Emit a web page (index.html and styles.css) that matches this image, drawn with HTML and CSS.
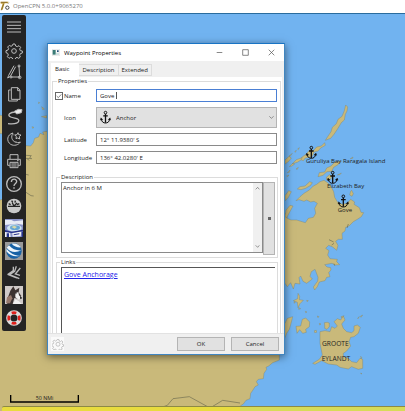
FILE: index.html
```html
<!DOCTYPE html>
<html lang="en">
<head>
<meta charset="utf-8">
<title>OpenCPN 5.0.0+9065270</title>
<link rel="stylesheet" href="styles.css">
</head>
<body>
<header class="app-title">
  <svg class="app-logo" viewBox="0 0 30 30" aria-hidden="true">
    <path d="M2 2h24l-2 5H14L8 26H2L8 8H2z" fill="#c9a545"/>
    <path d="M4 28 11 8M2 4h20" stroke="#6b5420" stroke-width="2" fill="none"/>
    <circle cx="22" cy="20" r="5" fill="none" stroke="#444" stroke-width="3"/>
    <path d="M23 9l4-4" stroke="#888" stroke-width="2"/>
  </svg>
  <span>OpenCPN 5.0.0+9065270</span>
</header>

<main class="chart">
  <svg class="map" viewBox="0 39 1215 1194" preserveAspectRatio="xMinYMin slice" role="img" aria-label="Nautical chart">
    <defs>
      <g id="anchor" fill="none" stroke="#111">
        <circle cx="0" cy="-15" r="4" stroke-width="3"/>
        <path d="M0-11V16M-7-5H7" stroke-width="4"/>
        <path d="M-13 4C-12 14-6 17 0 17S12 14 13 4" stroke-width="3"/>
        <path d="M-16 8l2-7 6 6zM16 8l-2-7-6 6z" fill="#111" stroke-width="1"/>
      </g>
    </defs>
    <g class="land">
      <path d="M-5 602 30 590 50 500 78 437 92 438 100 428 104 415 116 411 120 400 132 404 128 396 140 394 145 400 300 420 600 400 840 650 858 640 862 655 873 660 890 660 916 668 925 655 940 652 947 640 944 625 952 610 942 604 932 606 920 600 912 604 897 599 888 602 900 590 912 580 928 570 940 558 950 553 960 545 972 541 983 548 992 557 1001 575 1004 592 1013 607 1027 613 1042 610 1052 598 1064 606 1062 613 1078 623 1083 637 1091 638 1084 650 1072 658 1060 665 1047 678 1037 682 1035 693 1026 700 1027 718 1015 718 1007 724 1014 736 1010 751 998 741 986 736 977 745 987 752 983 765 990 776 1012 778 1010 785 1019 794 1005 795 996 790 974 794 981 801 992 803 993 810 986 818 990 830 980 832 975 842 958 846 952 860 944 870 940 861 953 843 954 832 945 808 934 815 930 829 937 837 920 850 909 844 902 828 897 833 900 852 885 850 880 867 872 848 862 860 855 850 830 870 820 990 855 970 862 955 878 950 873 970 868 988 860 1000 852 1020 838 1040 838 1080 818 1088 806 1098 798 1102 800 1108 792 1120 790 1136 775 1138 769 1145 775 1155 765 1160 757 1173 752 1180 750 1196 738 1201 730 1212 722 1217 720 1240-5 1240z"/>
      <path d="M-5 345 8 347 20 380 12 402-5 400zM124 350l16-3v7zM125 320l8 7-5 2zM116 306l3 2-3 3zM96 380l6 2-4 3z"/>
      <path d="M1037 315l6 6-2 12-5 10-3 17-9 8-12 20-10 15-10 12-16 6 9-14 8-12 4-13 12-11 5-13 12-9 7-17z"/>
      <path d="M974 428l2 8-14 8-8 9-12 3-5 13-13 4-8 1-6 8-8-3 3-7 13-9 10-12 12 1 10-11 14-3z"/>
      <path d="M903 480l4-7-18 6-12 12 15-4zM884 492l-7-1-9 9 8-2zM855 480l12-11 7 5-8 10-12 9zM862 518l8-8-2 7zM867 468l10-8-7 9zM884 455l5-4-3 6zM893 447l5-4-3 6zM888 507l7-5-3 6zM860 528l7-3-4 5zM1051 476l8-5-1 4z"/>
      <path d="M1005 486l-12 12-13 6-6 12-16 2-4 12 15-4 12-11 14-1 6-12 13-8 10-10zM1012 525l12-6-4 5zM979 532l9-8 8 5-5 10-11 1z"/>
      <path d="M892 567l8-7 15-2 14-13 8 3-5 8-15 9-14 4zM855 587l11-15 8 3-9 17-9 10zM858 630l12-14 9 2-11 20-8 15-5-3zM1052 574l3-3 5 10-4 8-7-4z"/>
      <path d="M894 880l5 9-1 10 12 2-10 10-6 12-2-16-12-5 13-6zM920 901l5 1-4 3zM882 905l4 1-3 4zM896 923l6 3-6 2zM916 934l5 2-4 2z"/>
      <path d="M907 958l10-4 12 12-1 14-11 8 2 9-11 3-9-11-8 11-3-21 14-1zM943 992l6-1 1 6-6 1zM952 948l5 2-3 3zM958 970l5 2-4 3z"/>
      <path d="M960 995 975 992 990 995 995 980 1005 985 1012 978 1002 965 1012 956 1022 960 1030 948 1035 960 1025 972 1030 985 1040 995 1055 998 1062 992 1062 978 1072 975 1081 982 1075 1000 1062 1010 1052 1012 1047 1025 1052 1038 1040 1053 1030 1060 1030 1070 1045 1075 1055 1085 1070 1088 1080 1075 1088 1078 1088 1105 1075 1108 1055 1100 1045 1107 1020 1102 1010 1095 985 1092 965 1082 945 1093 938 1090 958 1078 967 1065 960 1030z"/>
      <path d="M974 975l-1-7 9-1 6 2v11l-7 8-7-3zM1073 954l5-4-4 6zM1081 949l7-4-5 7zM1023 950l9-3-7 7zM1082 1069l3 3-1 4zM1082 1119l4 2-3 1z"/>
    </g>
    <path class="coast" d="M78 466l16 1-5 5 6 4-16-1 9 6M78 523l8 2M78 577l15 10 8 1M457 1232l45-16 17-20 49-6 62 34 38-23 52 8M1004 797l-2-6M987 719l14 7M1045 672l-4 12M1002 730l-7 5"/>
    <use href="#anchor" x="934" y="458"/>
    <use href="#anchor" x="998" y="533"/>
    <use href="#anchor" x="1030" y="604"/>
    <g class="place">
      <text x="918" y="490">Guruliya Bay Raragala Island</text>
      <text x="981" y="564">Elizabeth Bay</text>
      <text x="1013" y="635">Gove</text>
    </g>
    <g class="region">
      <text x="966" y="1039">GROOTE</text>
      <text x="965" y="1083">EYLANDT</text>
    </g>
    <path d="M32 1185v21h203v-21" fill="none" stroke="#000" stroke-width="4"/>
    <text class="scale" x="107" y="1199">50 NMi</text>
  </svg>
  <div class="status-band"></div>

  <nav class="toolbar" aria-label="Chart tools">
    <button aria-label="Menu"><svg viewBox="0 0 54 54"><path d="M6 12h42M6 22h42M6 32h42M6 42h42" stroke-width="3"/></svg></button>
    <button aria-label="Options"><svg viewBox="0 0 54 54"><path d="M24 9h6l2 6 5 2 5-3 5 5-3 5 2 5 6 1v6l-6 2-2 5 2 5-5 4-5-3-4 2-2 5h-6l-2-5-5-2-5 3-5-5 3-5-2-5-5-2v-6l6-2 2-4-3-5 5-5 5 3 4-2z"/><circle cx="27" cy="30" r="7"/></svg></button>
    <button aria-label="Route"><svg viewBox="0 0 54 54"><path d="M27 8 11 37l-3 8 8-5L32 11M42 9l2 36M19 42h24"/><circle cx="42" cy="9" r="3"/><circle cx="44" cy="43" r="4"/><circle cx="18" cy="42" r="3"/></svg></button>
    <button aria-label="Route manager"><svg viewBox="0 0 54 54"><path d="M19 8h20l6 8v27H19zM38 9v8h7M17 15h-6v33h26v-4"/></svg></button>
    <button aria-label="Track"><svg viewBox="0 0 54 54"><path d="M34 12c-20-1-29 10-17 15s28 4 24 13c-3 9-21 8-32 7" stroke-width="4"/><path d="M28 10 40 4l11 1-2 9-14 4z" fill="#eee"/></svg></button>
    <button aria-label="Colour scheme"><svg viewBox="0 0 54 54"><path d="M24 9C6 13 3 34 17 43c10 6 24 2 29-7-11 5-22-1-25-10-2-6 0-12 3-17z"/><path d="M39 8l2 6 7 1-5 5 1 7-6-3-5 2 1-6-4-5 6-1z"/><path d="M27 13v3M33 33v2" /></svg></button>
    <button aria-label="Print"><svg viewBox="0 0 54 54"><path d="M15 21V8h24v13M14 40H8V22h38v18h-6M15 31h24v16H15zM19 36h16M19 42h16M36 26h5"/></svg></button>
    <button aria-label="Help"><svg viewBox="0 0 54 54"><circle cx="27" cy="27" r="22" stroke-width="4"/><path d="M19 21c1-12 17-10 16-1-1 7-8 6-8 13M27 37v4" stroke-width="4"/></svg></button>
    <button aria-label="Dashboard"><svg viewBox="0 0 54 54"><circle cx="27" cy="27" r="22" fill="#c9c9c9" stroke="none"/><path d="M9 28h36M27 28 22 17M11 20l6 3M20 11l3 5M31 11l-1 6M43 20l-7 3M27 27l9-9" stroke="#222" stroke-width="4"/></svg></button>
    <button aria-label="Weather"><svg viewBox="0 0 54 54"><g stroke="none"><path fill="#8b94c8" d="M0 0h54v54H0z"/><path fill="#e8ebf5" d="M0 3h19l8 4L54 4v13L36 14 0 18z"/><ellipse cx="28" cy="27" rx="22" ry="11" fill="#d0e6f0"/><ellipse cx="30" cy="26" rx="15" ry="7" fill="#65a6d5"/><path fill="#d9d8a6" d="M19 24l9-4 8 4-7 5z"/><path fill="#f1f1f4" d="M0 38l15 2 2 14H0zM22 42l27-5-2 14-24 2z"/><path fill="#25318a" d="M5 43h7v11H5zM0 33l20 5 34-6v5l-34 5-20-3zM26 46l17-3v3l-17 3zM50 38h4v16h-4z"/></g></svg></button>
    <button aria-label="Globe view"><svg viewBox="0 0 54 54"><g stroke="none"><path fill="#999" d="M0 0h54v54H0z"/><circle cx="27" cy="27" r="23" fill="#1762a6"/><path fill="#eef6fc" d="M5 17C17 32 32 33 49 25c-14 1-28-3-37-15zM4 28c11 13 26 18 41 13-16 0-29-7-40-21zM20 5c8 9 18 12 28 11C41 7 31 2 20 5z"/></g></svg></button>
    <button aria-label="Tides"><svg viewBox="0 0 54 54"><path d="M25 8v12L10 30l33 14M46 12 31 30l14 4M34 7 29 22 15 31M8 31l27 11" stroke="#bbb" stroke-width="4"/></svg></button>
    <button aria-label="Logbook"><svg viewBox="0 0 54 54"><g stroke="none"><path fill="#cfcac8" d="M0 0h54v54H0z"/><path fill="#3c3230" d="M16 14 25 1l6 12 12-8-2 14 8 11-9 8-12-2-5 18H6l6-15-6 3z"/><path fill="#f1efee" d="M31 22l9-4 2 10 7 8-8 5-10-7zM31 40l10 5 10 9H24z"/><path fill="#97796c" d="M6 34l12-7 4 10-7 15H3z"/><path fill="#111" d="M45 31l7 5-6 4zM31 21l5 2-4 2z"/></g></svg></button>
    <button aria-label="Man overboard"><svg viewBox="0 0 54 54"><circle cx="27" cy="27" r="17" stroke="#ddd" stroke-width="13"/><path d="M20 12q7-2 14 0M20 42q7 2 14 0M12 20q-2 7 0 14M42 20q2 7 0 14" stroke="#e0201c" stroke-width="8"/></svg></button>
  </nav>

  <section class="dialog" role="dialog" aria-labelledby="dlg-title">
    <div class="dialog-title">
      <svg class="dialog-logo" viewBox="0 0 24 21" aria-hidden="true"><path fill="#fff" stroke="#b5b5b5" d="M1 1h22v19H1z"/><path fill="#397b76" d="M2 3h9v14H2z"/><path fill="#234d7a" d="M15 4h5v5h-5z"/><path fill="#cde0e0" d="M12 11h9v7h-9z"/></svg>
      <h1 id="dlg-title">Waypoint Properties</h1>
      <div class="window-buttons">
        <button aria-label="Minimize"><svg viewBox="0 0 20 20"><path d="M2 10h16"/></svg></button>
        <button aria-label="Maximize"><svg viewBox="0 0 20 20"><path d="M2 2h16v16H2z"/></svg></button>
        <button aria-label="Close"><svg viewBox="0 0 20 20"><path d="M2 2l16 16M18 2 2 18"/></svg></button>
      </div>
    </div>

    <div class="tabs" role="tablist">
      <button class="tab active" role="tab" aria-selected="true">Basic</button>
      <button class="tab" role="tab" aria-selected="false">Description</button>
      <button class="tab" role="tab" aria-selected="false">Extended</button>
    </div>

    <div class="panel">
      <fieldset class="properties">
        <legend>Properties</legend>
        <div class="form">
          <div class="check">
            <span class="box">
              <input id="show-name" type="checkbox" checked>
              <svg viewBox="0 0 24 24" aria-hidden="true"><path d="M5 12l5 5 9-10"/></svg>
            </span>
            <label for="show-name">Name</label>
          </div>
          <div class="field">
            <input class="text focused" type="text" value="Gove" aria-label="Name">
            <span class="caret"></span>
          </div>
          <label for="icon">Icon</label>
          <div class="field">
            <select id="icon"><option>Anchor</option></select>
            <svg class="select-icon" viewBox="-20 -22 40 44" aria-hidden="true"><use href="#anchor"/></svg>
            <svg class="select-arrow" viewBox="0 0 15 15" aria-hidden="true"><path d="M1 4l6 6 7-6"/></svg>
          </div>
          <label for="lat">Latitude</label>
          <input class="text" id="lat" type="text" value="12° 11.9380' S">
          <label for="lon">Longitude</label>
          <input class="text" id="lon" type="text" value="136° 42.0280' E">
        </div>

        <fieldset class="group description">
          <legend>Description</legend>
          <div class="description-row">
            <div class="memo">
              <textarea aria-label="Description">Anchor in 6 M</textarea>
              <div class="scrollbar" aria-hidden="true">
                <svg viewBox="0 0 15 15"><path d="M2 10l6-6 5 6"/></svg>
                <svg viewBox="0 0 15 15"><path d="M2 4l6 6 5-6"/></svg>
              </div>
            </div>
            <button class="more" aria-label="Edit description"><i></i></button>
          </div>
        </fieldset>

        <fieldset class="group links">
          <legend>Links</legend>
          <div class="link-list"><a href="#gove">Gove Anchorage</a></div>
        </fieldset>
      </fieldset>
    </div>

    <div class="footer">
      <button class="gear" aria-label="Settings"><svg viewBox="0 0 54 54"><path d="M23 7h8l2 7 5 2 6-4 5 6-4 6 2 5 5 1v7l-7 2-2 5 3 6-6 4-6-3-4 2-2 5h-7l-2-6-5-2-6 3-5-5 4-6-2-5-6-2v-7l7-2 2-5-4-6 6-5 6 4 4-2z"/><circle cx="27" cy="28" r="9"/></svg></button>
      <button class="action">OK</button>
      <button class="action">Cancel</button>
    </div>
  </section>
</main>
</body>
</html>
```
FILE: styles.css
```css
* {
  box-sizing: border-box;
}

body {
  margin: 0;
  height: 100vh;
  display: flex;
  flex-direction: column;
  overflow: hidden;
  font: 6px/8px "Open Sans", "Noto Sans", sans-serif;
  color: #222;
}

button,
input,
select,
textarea {
  font: inherit;
  color: inherit;
  margin: 0;
  padding: 0;
  border: 0;
  border-radius: 0;
  outline: 0;
}

.app-title {
  flex: none;
  height: 14px;
  display: flex;
  align-items: center;
  gap: 3px;
  padding-bottom: 1px;
  background: #fff;
  border-bottom: 1px solid #2a6c9e;
  color: #777;
}

.app-logo {
  width: 10px;
  height: 10px;
}

.chart {
  position: relative;
  flex: 1;
  overflow: hidden;
  background: #71b3f0;
}

.map {
  position: absolute;
  top: -1px;
  left: 0;
  width: 100%;
  height: calc(100% + 1px);
}

.land {
  fill: #c9b97a;
  stroke: #7d7a58;
  stroke-width: 1;
}

.coast {
  fill: none;
  stroke: #6e6c50;
  stroke-width: 2;
}

.place,
.region,
.scale {
  font-size: 18px;
  fill: #1d1d1d;
}

.region {
  font-size: 20px;
}

.scale {
  font-size: 16px;
}

.status-band {
  position: absolute;
  left: 2px;
  right: 0;
  bottom: 0;
  height: 5px;
  border-top: 1px solid #8d8a45;
  border-radius: 2px 0 0 0;
  background: linear-gradient(90deg, #e8dc3e 59%, #d7db58 59%);
}

.toolbar {
  position: absolute;
  top: 1px;
  bottom: 80px;
  left: 2px;
  width: 24px;
  padding: 1px 0 2px;
  display: grid;
  grid-auto-rows: 1fr;
  border-radius: 2px;
  background: #242424;
}

.toolbar button {
  display: grid;
  place-items: center;
  background: none;
}

.toolbar svg {
  width: 18px;
  height: 18px;
  fill: none;
  stroke: #bcbcbc;
  stroke-width: 3;
}

.dialog {
  position: absolute;
  top: 29px;
  right: 120px;
  bottom: 56px;
  left: 47px;
  display: flex;
  flex-direction: column;
  border: 1px solid #4186c0;
  border-top-color: #1874c4;
  background: #f0f0f0;
  box-shadow: 0 2px 8px rgba(0, 0, 0, 0.5);
}

.dialog-title {
  flex: none;
  height: 17px;
  padding: 0 9px 0 4px;
  display: flex;
  align-items: center;
  gap: 4px;
  background: #fff;
}

.dialog-logo {
  width: 8px;
  height: 7px;
}

h1 {
  flex: 1;
  margin: 0;
  font-size: 6px;
  font-weight: 400;
  color: #000;
}

.window-buttons {
  display: flex;
  gap: 19px;
}

.window-buttons button {
  display: grid;
  background: none;
}

.window-buttons svg {
  width: 7px;
  height: 7px;
  fill: none;
  stroke: #555;
  stroke-width: 2;
}

.tabs {
  flex: none;
  height: 16px;
  padding-left: 3px;
  display: flex;
  align-items: flex-end;
}

.tab {
  height: 12px;
  margin-bottom: 1px;
  padding: 0 3px;
  border: 1px solid #dcdcdc;
  border-left: 0;
  background: #f0f0f0;
}

.tab.active {
  height: 14px;
  margin: 0;
  padding: 0 10px 3px 4px;
  border: 0;
  background: #fff;
}

.panel {
  flex: 1;
  min-height: 0;
  margin: 0 2px 0 3px;
  padding: 0 1px;
  display: flex;
  background: #fff;
}

fieldset {
  min-width: 0;
  margin: 0;
  border: 1px solid #dcdcdc;
}

legend {
  height: 8px;
  padding: 0 1px;
}

.properties {
  flex: 1;
  display: flex;
  flex-direction: column;
  padding: 4px 2px 0;
  border-bottom: 0;
}

.properties > legend {
  margin-left: 2px;
}

.form {
  display: grid;
  grid-template-columns: 41px 1fr;
  row-gap: 5px;
  align-items: center;
  padding-right: 1px;
}

.form > label {
  padding-left: 9px;
}

.check {
  display: flex;
  align-items: center;
  gap: 1px;
}

.box {
  position: relative;
  display: grid;
}

.box input {
  appearance: none;
  width: 8px;
  height: 8px;
  border: 1px solid #666;
  background: #fff;
}

.box svg {
  position: absolute;
  inset: 0;
  fill: none;
  stroke: #444;
  stroke-width: 2;
  pointer-events: none;
}

.box input:not(:checked) + svg {
  display: none;
}

.field {
  position: relative;
  display: flex;
}

.text {
  width: 100%;
  height: 13px;
  padding: 0 3px;
  border: 1px solid #8a8a8a;
  background: #fff;
}

.text.focused {
  border-color: #4a7fd4;
}

.caret {
  position: absolute;
  left: 20px;
  top: 3px;
  width: 1px;
  height: 7px;
  background: #555;
}

select {
  appearance: none;
  width: 100%;
  height: 21px;
  padding-left: 19px;
  border: 1px solid #b4b4b4;
  background: #e1e1e1;
}

.select-icon {
  position: absolute;
  left: 3px;
  top: 3px;
  width: 13px;
  height: 15px;
}

.select-arrow {
  position: absolute;
  right: 3px;
  top: 8px;
  width: 5px;
  height: 5px;
}

.select-arrow path,
.scrollbar path {
  fill: none;
  stroke: #666;
  stroke-width: 2;
}

.group {
  margin: 0 0 0 1px;
  padding: 1px 2px 2px 4px;
}

.group legend {
  margin-left: -1px;
}

.description {
  margin-top: 9px;
}

.description-row {
  display: flex;
}

.memo {
  flex: 1;
  height: 71px;
  display: flex;
  border: 1px solid #8a8a8a;
}

textarea {
  flex: 1;
  min-width: 0;
  padding: 1px;
  resize: none;
  overflow: hidden;
  background: #fff;
}

.scrollbar {
  width: 9px;
  padding: 3px 0;
  display: flex;
  flex-direction: column;
  justify-content: space-between;
  align-items: center;
  background: #f0f0f0;
}

.scrollbar svg {
  width: 5px;
  height: 5px;
}

.more {
  width: 12px;
  height: 73px;
  display: grid;
  place-items: center;
  border: 1px solid #b4b4b4;
  background: #e1e1e1;
}

.more i {
  width: 3px;
  height: 3px;
  background: #666;
}

.links {
  flex: 1;
  display: flex;
  flex-direction: column;
  padding-bottom: 0;
  border-bottom: 0;
}

.link-list {
  flex: 1;
  padding: 3px 2px;
  border-top: 1px solid #555;
  border-left: 1px solid #555;
  font-size: 7px;
}

.link-list a {
  color: #2222e8;
}

.footer {
  flex: none;
  height: 21px;
  padding: 0 5px 0 3px;
  display: flex;
  align-items: center;
  gap: 6px;
  border-top: 1px solid #e2e2e2;
}

.gear {
  width: 13px;
  height: 14px;
  margin-right: auto;
  display: grid;
  place-items: center;
  background: #fafafa;
}

.gear svg {
  width: 12px;
  height: 12px;
  fill: none;
  stroke: #aaa;
  stroke-width: 3;
}

.action {
  width: 48px;
  height: 14px;
  border: 1px solid #b4b4b4;
  background: #e1e1e1;
}
```
